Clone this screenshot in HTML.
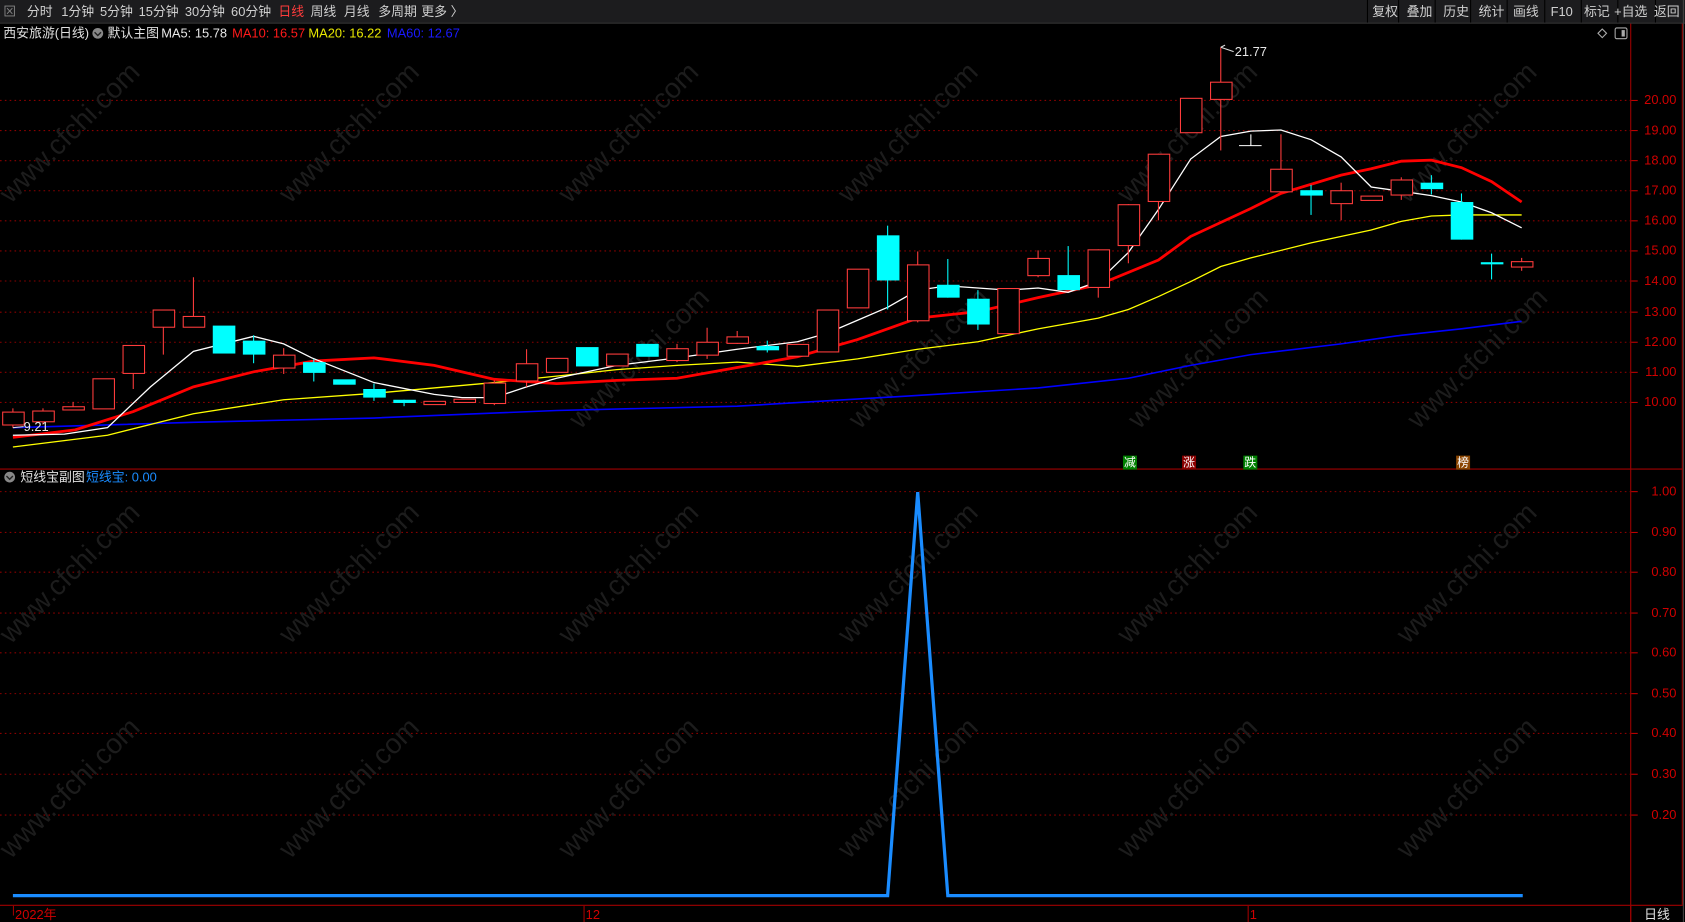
<!DOCTYPE html>
<html><head><meta charset="utf-8"><style>
html,body{margin:0;padding:0;background:#000;width:1685px;height:922px;overflow:hidden}
svg{display:block}
text{font-family:"Liberation Sans","Noto Sans CJK SC",sans-serif}
</style></head><body>
<svg width="1685" height="922" viewBox="0 0 1568 858" preserveAspectRatio="none" xmlns="http://www.w3.org/2000/svg">
<rect width="1568" height="858" fill="#000"/>
<rect x="0" y="0" width="1568" height="21" fill="#1c1c1e"/>
<line x1="0" y1="21.5" x2="1568" y2="21.5" stroke="#3a3a3a"/>
<g font-size="12" fill="#d0d0d0">
<text x="3" y="15" fill="#888">⊠</text>
<text x="25" y="15">分时</text><text x="57" y="15">1分钟</text><text x="93" y="15">5分钟</text>
<text x="129" y="15">15分钟</text><text x="172" y="15">30分钟</text><text x="215" y="15">60分钟</text>
<text x="259" y="15" fill="#ff3c3c">日线</text><text x="289" y="15">周线</text><text x="320" y="15">月线</text>
<text x="352" y="15">多周期</text><text x="392" y="15">更多 〉</text>
</g>
<g stroke="#000" stroke-width="1">
<line x1="1368.5" y1="0" x2="1368.5" y2="21"/><line x1="1402.5" y1="0" x2="1402.5" y2="21"/>
<line x1="1437.5" y1="0" x2="1437.5" y2="21"/><line x1="1471.5" y1="0" x2="1471.5" y2="21"/>
<line x1="1505.5" y1="0" x2="1505.5" y2="21"/><line x1="1540.5" y1="0" x2="1540.5" y2="21"/>
<line x1="1335.5" y1="0" x2="1335.5" y2="21"/><line x1="1301.5" y1="0" x2="1301.5" y2="21"/><line x1="1272.5" y1="0" x2="1272.5" y2="21"/>
</g>
<g font-size="12" fill="#d0d0d0">
<text x="1277" y="15">复权</text><text x="1309" y="15">叠加</text><text x="1343" y="15">历史</text>
<text x="1376" y="15">统计</text><text x="1408" y="15">画线</text><text x="1443" y="15">F10</text>
<text x="1474" y="15">标记</text><text x="1502" y="15">+自选</text><text x="1539" y="15">返回</text>
</g>
<g font-size="12">
<text x="3" y="35" fill="#e0e0e0">西安旅游(日线)</text>
<circle cx="91" cy="31" r="5" fill="#888"/><path d="M88 30 l3 3 l3 -3" stroke="#222" fill="none" stroke-width="1.3"/>
<text x="100" y="35" fill="#e0e0e0">默认主图</text>
<text x="150" y="35" fill="#e8e8e8">MA5: 15.78</text>
<text x="216" y="35" fill="#ff1a1a">MA10: 16.57</text>
<text x="287" y="35" fill="#e8e800">MA20: 16.22</text>
<text x="360" y="35" fill="#1a1aff">MA60: 12.67</text>
</g>
<path d="M1491 27 l4 4 l-4 4 l-4 -4 z" stroke="#aaa" fill="none"/>
<rect x="1503" y="26" width="11" height="10" rx="1.5" stroke="#aaa" fill="none"/><rect x="1509" y="28" width="3" height="6" fill="#aaa"/>
<line x1="1517.5" y1="22" x2="1517.5" y2="858" stroke="#a00000"/>
<line x1="0" y1="436.5" x2="1566" y2="436.5" stroke="#a00000"/>
<line x1="0" y1="842.5" x2="1566" y2="842.5" stroke="#a00000"/>
<line x1="1565.5" y1="22" x2="1565.5" y2="842" stroke="#a00000"/>
<line x1="1566.5" y1="0" x2="1566.5" y2="858" stroke="#444"/>
<g stroke="#8a0000" stroke-dasharray="1.5,3" stroke-width="1">
<line x1="0" y1="93.5" x2="1517" y2="93.5"/><line x1="0" y1="121.5" x2="1517" y2="121.5"/><line x1="0" y1="149.5" x2="1517" y2="149.5"/>
<line x1="0" y1="177.5" x2="1517" y2="177.5"/><line x1="0" y1="205.5" x2="1517" y2="205.5"/><line x1="0" y1="233.5" x2="1517" y2="233.5"/>
<line x1="0" y1="261.5" x2="1517" y2="261.5"/><line x1="0" y1="290.5" x2="1517" y2="290.5"/><line x1="0" y1="318.5" x2="1517" y2="318.5"/>
<line x1="0" y1="346.5" x2="1517" y2="346.5"/><line x1="0" y1="374.5" x2="1517" y2="374.5"/>
<line x1="0" y1="457.5" x2="1517" y2="457.5"/><line x1="0" y1="495.5" x2="1517" y2="495.5"/><line x1="0" y1="532.5" x2="1517" y2="532.5"/>
<line x1="0" y1="570.5" x2="1517" y2="570.5"/><line x1="0" y1="607.5" x2="1517" y2="607.5"/><line x1="0" y1="645.5" x2="1517" y2="645.5"/>
<line x1="0" y1="682.5" x2="1517" y2="682.5"/><line x1="0" y1="720.5" x2="1517" y2="720.5"/><line x1="0" y1="758.5" x2="1517" y2="758.5"/>
</g>
<g stroke="#c00000">
<line x1="1518" y1="93.5" x2="1524" y2="93.5"/><line x1="1518" y1="121.5" x2="1524" y2="121.5"/><line x1="1518" y1="149.5" x2="1524" y2="149.5"/>
<line x1="1518" y1="177.5" x2="1524" y2="177.5"/><line x1="1518" y1="205.5" x2="1524" y2="205.5"/><line x1="1518" y1="233.5" x2="1524" y2="233.5"/>
<line x1="1518" y1="261.5" x2="1524" y2="261.5"/><line x1="1518" y1="290.5" x2="1524" y2="290.5"/><line x1="1518" y1="318.5" x2="1524" y2="318.5"/>
<line x1="1518" y1="346.5" x2="1524" y2="346.5"/><line x1="1518" y1="374.5" x2="1524" y2="374.5"/>
<line x1="1518" y1="457.5" x2="1524" y2="457.5"/><line x1="1518" y1="495.5" x2="1524" y2="495.5"/><line x1="1518" y1="532.5" x2="1524" y2="532.5"/>
<line x1="1518" y1="570.5" x2="1524" y2="570.5"/><line x1="1518" y1="607.5" x2="1524" y2="607.5"/><line x1="1518" y1="645.5" x2="1524" y2="645.5"/>
<line x1="1518" y1="682.5" x2="1524" y2="682.5"/><line x1="1518" y1="720.5" x2="1524" y2="720.5"/><line x1="1518" y1="758.5" x2="1524" y2="758.5"/>
</g>
<g font-size="12" fill="#d00000" text-anchor="end">
<text x="1560" y="97">20.00</text><text x="1560" y="125">19.00</text><text x="1560" y="153">18.00</text>
<text x="1560" y="181">17.00</text><text x="1560" y="209">16.00</text><text x="1560" y="237">15.00</text>
<text x="1560" y="265">14.00</text><text x="1560" y="294">13.00</text><text x="1560" y="322">12.00</text>
<text x="1560" y="350">11.00</text><text x="1560" y="378">10.00</text>
<text x="1560" y="461">1.00</text><text x="1560" y="499">0.90</text><text x="1560" y="536">0.80</text>
<text x="1560" y="574">0.70</text><text x="1560" y="611">0.60</text><text x="1560" y="649">0.50</text>
<text x="1560" y="686">0.40</text><text x="1560" y="724">0.30</text><text x="1560" y="762">0.20</text>
</g>
<g font-size="26" fill="#1c1c1c" font-family="Liberation Sans">
<text transform="translate(10,190) rotate(-45)">www.cfchi.com</text>
<text transform="translate(270,190) rotate(-45)">www.cfchi.com</text>
<text transform="translate(530,190) rotate(-45)">www.cfchi.com</text>
<text transform="translate(790,190) rotate(-45)">www.cfchi.com</text>
<text transform="translate(1050,190) rotate(-45)">www.cfchi.com</text>
<text transform="translate(1310,190) rotate(-45)">www.cfchi.com</text>
<text transform="translate(540,400) rotate(-45)">www.cfchi.com</text>
<text transform="translate(800,400) rotate(-45)">www.cfchi.com</text>
<text transform="translate(1060,400) rotate(-45)">www.cfchi.com</text>
<text transform="translate(1320,400) rotate(-45)">www.cfchi.com</text>
<text transform="translate(10,600) rotate(-45)">www.cfchi.com</text>
<text transform="translate(270,600) rotate(-45)">www.cfchi.com</text>
<text transform="translate(530,600) rotate(-45)">www.cfchi.com</text>
<text transform="translate(790,600) rotate(-45)">www.cfchi.com</text>
<text transform="translate(1050,600) rotate(-45)">www.cfchi.com</text>
<text transform="translate(1310,600) rotate(-45)">www.cfchi.com</text>
<text transform="translate(10,800) rotate(-45)">www.cfchi.com</text>
<text transform="translate(270,800) rotate(-45)">www.cfchi.com</text>
<text transform="translate(530,800) rotate(-45)">www.cfchi.com</text>
<text transform="translate(790,800) rotate(-45)">www.cfchi.com</text>
<text transform="translate(1050,800) rotate(-45)">www.cfchi.com</text>
<text transform="translate(1310,800) rotate(-45)">www.cfchi.com</text>
</g>
<polyline fill="none" stroke="#0000ff" stroke-width="1.5" points="12,398 180,393 348,389 518,382 686,378 854,368 966,361 1050,352 1108,340 1164,330 1248,320 1304,312 1360,306 1416,299"/>
<polyline fill="none" stroke="#ffff00" stroke-width="1.2" points="12,416 100,405 180,385 264,372 348,366 404,361 460,356 518,350 574,344 630,340 686,337 742,341 798,334 854,325 910,318 966,306 1022,296 1050,288 1078,276 1108,262 1136,248 1164,240 1220,226 1276,214 1304,206 1332,201 1360,200 1416,200"/>
<polyline fill="none" stroke="#ff0000" stroke-width="2.6" points="12,407 70,400 124,383 180,360 236,346 292,336 348,333 404,340 460,353 518,357 574,354 630,352 686,342 742,332 798,316 854,296 910,290 966,277 1022,265 1078,242 1108,220 1164,194 1192,180 1248,163 1276,157 1304,150 1332,149 1360,156 1388,169 1416,188"/>
<polyline fill="none" stroke="#ffffff" stroke-width="1.2" points="12,405 60,404 100,398 140,360 180,327 236,313 264,320 290,333 348,356 404,367 430,370 460,370 490,360 518,352 574,340 630,333 686,325 742,318 770,310 798,298 826,286 854,270 882,266 938,270 966,268 994,272 1022,262 1050,235 1078,195 1108,148 1136,127 1164,122 1192,121 1220,130 1248,146 1276,174 1304,178 1332,182 1360,188 1388,198 1416,212"/>
<g stroke="#ff3c3c" stroke-width="1">
<line x1="12" y1="380" x2="12" y2="398"/><line x1="40" y1="380" x2="40" y2="395"/><line x1="68" y1="374" x2="68" y2="382"/>
<line x1="124" y1="347" x2="124" y2="362"/><line x1="152" y1="304" x2="152" y2="330"/><line x1="180" y1="258" x2="180" y2="304"/>
<line x1="264" y1="324" x2="264" y2="348"/><line x1="460" y1="354" x2="460" y2="377"/><line x1="490" y1="325" x2="490" y2="360"/>
<line x1="630" y1="320" x2="630" y2="337"/><line x1="658" y1="305" x2="658" y2="334"/><line x1="686" y1="308" x2="686" y2="320"/>
<line x1="854" y1="234" x2="854" y2="300"/><line x1="966" y1="233" x2="966" y2="258"/><line x1="1022" y1="232" x2="1022" y2="277"/>
<line x1="1050" y1="190" x2="1050" y2="245"/><line x1="1078" y1="143" x2="1078" y2="205"/><line x1="1136" y1="44" x2="1136" y2="140"/>
<line x1="1192" y1="125" x2="1192" y2="178"/><line x1="1248" y1="170" x2="1248" y2="205"/><line x1="1304" y1="165" x2="1304" y2="186"/>
<line x1="1416" y1="240" x2="1416" y2="252"/>
</g>
<g stroke="#00ffff" stroke-width="1">
<line x1="236" y1="312" x2="236" y2="338"/><line x1="292" y1="334" x2="292" y2="355"/><line x1="348" y1="357" x2="348" y2="373"/>
<line x1="714" y1="317" x2="714" y2="328"/><line x1="826" y1="210" x2="826" y2="288"/><line x1="882" y1="241" x2="882" y2="277"/>
<line x1="910" y1="270" x2="910" y2="307"/><line x1="994" y1="229" x2="994" y2="270"/><line x1="1220" y1="172" x2="1220" y2="200"/>
<line x1="1332" y1="163" x2="1332" y2="181"/><line x1="1360" y1="180" x2="1360" y2="223"/><line x1="1388" y1="236" x2="1388" y2="260"/>
<line x1="376" y1="372" x2="376" y2="378"/>
</g>
<g stroke="#ff3c3c" stroke-width="1" fill="#000">
<rect x="2.5" y="383.5" width="20" height="12"/><rect x="30.5" y="382.5" width="20" height="10"/><rect x="58.5" y="378.5" width="20" height="3"/>
<rect x="86.5" y="352.5" width="20" height="28"/><rect x="114.5" y="321.5" width="20" height="26"/><rect x="142.5" y="288.5" width="20" height="16"/>
<rect x="170.5" y="294.5" width="20" height="10"/><rect x="254.5" y="330.5" width="20" height="12"/>
<rect x="394.5" y="373.5" width="20" height="3"/><rect x="422.5" y="371.5" width="20" height="3"/><rect x="450.5" y="356.5" width="20" height="19"/>
<rect x="480.5" y="338.5" width="20" height="16"/><rect x="508.5" y="333.5" width="20" height="13"/><rect x="564.5" y="329.5" width="20" height="11"/>
<rect x="620.5" y="324.5" width="20" height="11"/><rect x="648.5" y="318.5" width="20" height="12"/><rect x="676.5" y="313.5" width="20" height="6"/>
<rect x="732.5" y="320.5" width="20" height="11"/><rect x="760.5" y="288.5" width="20" height="39"/><rect x="788.5" y="250.5" width="20" height="36"/>
<rect x="844.5" y="246.5" width="20" height="52"/><rect x="928.5" y="268.5" width="20" height="42"/><rect x="956.5" y="240.5" width="20" height="16"/>
<rect x="1012.5" y="232.5" width="20" height="35"/><rect x="1040.5" y="190.5" width="20" height="38"/><rect x="1068.5" y="143.5" width="20" height="44"/>
<rect x="1098.5" y="91.5" width="20" height="32"/><rect x="1126.5" y="76.5" width="20" height="16"/><rect x="1182.5" y="157.5" width="20" height="21"/>
<rect x="1238.5" y="177.5" width="20" height="12"/><rect x="1266.5" y="182.5" width="20" height="4"/><rect x="1294.5" y="167.5" width="20" height="14"/>
<rect x="1406.5" y="243.5" width="20" height="5"/>
</g>
<g fill="#00ffff">
<rect x="198" y="303" width="21" height="26"/><rect x="226" y="317" width="21" height="13"/><rect x="282" y="337" width="21" height="10"/>
<rect x="310" y="353" width="21" height="5"/><rect x="338" y="362" width="21" height="8"/><rect x="366" y="372" width="21" height="3"/>
<rect x="536" y="323" width="21" height="18"/><rect x="592" y="320" width="21" height="12"/><rect x="704" y="322" width="21" height="4"/>
<rect x="816" y="219" width="21" height="42"/><rect x="872" y="265" width="21" height="12"/><rect x="900" y="278" width="21" height="24"/>
<rect x="984" y="256" width="21" height="14"/><rect x="1210" y="177" width="21" height="5"/><rect x="1322" y="170" width="21" height="6"/>
<rect x="1350" y="188" width="21" height="35"/><rect x="1378" y="244" width="21" height="2"/>
</g>
<path d="M1164 125 v10 M1153 135.5 h21" stroke="#fff" stroke-width="1"/>
<path d="M1136 44 l4 -2 M1136 44 l12 4" stroke="#ddd" fill="none"/>
<text x="1149" y="52" font-size="12" fill="#e8e8e8">21.77</text>
<path d="M12 398 l10 -1" stroke="#ddd"/>
<text x="22" y="401" font-size="12" fill="#e8e8e8">9.21</text>
<rect x="1045" y="424" width="13" height="13" fill="#008000"/><text x="1046" y="434" font-size="11" fill="#fff">减</text>
<rect x="1100" y="424" width="13" height="13" fill="#8b0000"/><text x="1101" y="434" font-size="11" fill="#fff">涨</text>
<rect x="1157" y="424" width="13" height="13" fill="#008000"/><text x="1158" y="434" font-size="11" fill="#fff">跌</text>
<rect x="1355" y="424" width="13" height="13" fill="#8b4500"/><text x="1356" y="434" font-size="11" fill="#fff">榜</text>
<circle cx="9" cy="444" r="5" fill="#888"/><path d="M6 443 l3 3 l3 -3" stroke="#222" fill="none" stroke-width="1.3"/>
<text x="19" y="448" font-size="12" fill="#e0e0e0">短线宝副图</text>
<text x="80" y="448" font-size="12" fill="#1a8cff">短线宝: 0.00</text>
<polyline fill="none" stroke="#1a8cff" stroke-width="3" points="12,833.5 826,833.5 854,458 882,833.5 1417,833.5"/>
<g stroke="#a00000"><line x1="12.5" y1="843" x2="12.5" y2="852"/><line x1="543.5" y1="843" x2="543.5" y2="858"/><line x1="1161.5" y1="843" x2="1161.5" y2="858"/><line x1="1517.5" y1="843" x2="1517.5" y2="858"/></g>
<text x="14" y="855" font-size="12" fill="#d00000">2022年</text>
<text x="545" y="855" font-size="12" fill="#d00000">12</text>
<text x="1163" y="855" font-size="12" fill="#d00000">1</text>
<text x="1530" y="855" font-size="12" fill="#e0e0e0">日线</text>
</svg>
</body></html>
